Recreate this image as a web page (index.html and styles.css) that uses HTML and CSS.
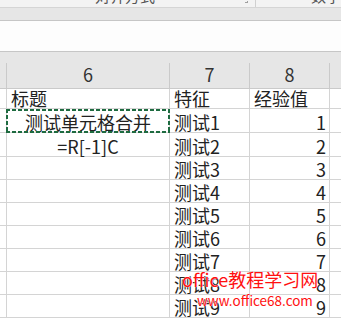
FILE: index.html
```html
<!DOCTYPE html>
<html lang="zh-CN">
<head>
    <meta charset="UTF-8">
    <meta name="viewport" content="width=device-width, initial-scale=1.0">
    <title>合并单元格</title>
    <link rel="stylesheet" href="styles.css">
</head>
<body>

    <div class="ribbon">
        <div class="group">
            <span class="group-label">对齐方式</span>
            <span class="launcher"></span>
        </div>
        <span class="group-label next">数字</span>
    </div>
    <div class="name-bar"></div>
    <div class="formula-bar"></div>

    <div class="sheet">
        <div class="grid">
            <div class="hd"></div><div class="hd">6</div><div class="hd">7</div><div class="hd">8</div><div class="hd tail"></div>

            <div class="c"></div><div class="c">标题</div><div class="c">特征</div><div class="c">经验值</div><div class="c tail"></div>
            <div class="c"></div><div class="c center copied">测试单元格合并</div><div class="c">测试1</div><div class="c num">1</div><div class="c tail"></div>
            <div class="c"></div><div class="c center">=R[-1]C</div><div class="c">测试2</div><div class="c num">2</div><div class="c tail"></div>
            <div class="c"></div><div class="c"></div><div class="c">测试3</div><div class="c num">3</div><div class="c tail"></div>
            <div class="c"></div><div class="c"></div><div class="c">测试4</div><div class="c num">4</div><div class="c tail"></div>
            <div class="c"></div><div class="c"></div><div class="c">测试5</div><div class="c num">5</div><div class="c tail"></div>
            <div class="c"></div><div class="c"></div><div class="c">测试6</div><div class="c num">6</div><div class="c tail"></div>
            <div class="c"></div><div class="c"></div><div class="c">测试7</div><div class="c num">7</div><div class="c tail"></div>
            <div class="c"></div><div class="c"></div><div class="c">测试8</div><div class="c num">8</div><div class="c tail"></div>
            <div class="c"></div><div class="c"></div><div class="c">测试9</div><div class="c num">9</div><div class="c tail"></div>
        </div>

        <div class="watermark">
            <div class="wm-title">office教程学习网</div>
            <div class="wm-url">www.office68.com</div>
        </div>
    </div>

</body>
</html>
```

FILE: styles.css
```css
body {
    margin: 0;
    font-family: "Noto Sans CJK SC", "Noto Sans", sans-serif;
    background: #ffffff;
    color: #222;
    height: 318px;
    overflow: hidden;
}
.ribbon {
    display: flex;
    height: 7px;
    background: #f3f3f3;
    border-bottom: 1px solid #d5d5d5;
    overflow: hidden;
}
.group {
    display: flex;
    width: 276px;
    border-right: 1px solid #d0d0d0;
    box-sizing: border-box;
}
.group-label {
    font-size: 15px;
    line-height: 15px;
    margin-top: -12px;
    margin-left: 95px;
    color: #555;
    white-space: nowrap;
}
.group-label.next {
    margin-left: 55px;
}
.launcher {
    width: 2px;
    height: 1px;
    margin-left: auto;
    margin-right: 7px;
    margin-top: 1px;
    border-right: 1px solid #a0a0a0;
    border-bottom: 1px solid #a0a0a0;
}
.name-bar {
    height: 12px;
    background: #e6e6e6;
    border-bottom: 1px solid #c6c6c6;
}
.formula-bar {
    height: 30px;
    background: #fdfdfd;
    border-bottom: 1px solid #c6c6c6;
}
.sheet {
    position: relative;
    height: 266px;
    overflow: hidden;
    background: #e6e6e6;
    padding-top: 11px;
    box-sizing: border-box;
}
.grid {
    display: grid;
    grid-template-columns: 7px 163px 80px 80px 1fr;
    grid-template-rows: 26px 20px 24px 24px repeat(8, 23px);
}
.hd, .c {
    box-sizing: border-box;
    border-right: 1px solid #d4d4d4;
    border-bottom: 1px solid #d4d4d4;
    font-size: 18px;
    line-height: 20px;
    display: flex;
    align-items: flex-end;
    white-space: nowrap;
}
.hd {
    background: #e6e6e6;
    border-color: #cacaca;
    justify-content: center;
    padding-bottom: 4px;
    color: #333;
}
.c {
    background: #ffffff;
    padding-left: 4px;
}
.tail {
    border-right: none;
}
.center {
    justify-content: center;
    padding-left: 0;
}
.num {
    justify-content: flex-end;
    padding-right: 3px;
}

/* marching ants round the copied cell */
.copied {
    position: relative;
}
.copied::after {
    content: "";
    position: absolute;
    left: -1px;
    right: -1px;
    top: 0;
    bottom: -1px;
    background:
        repeating-linear-gradient(90deg, #1e6b40 0 4px, transparent 4px 6px) top / 100% 2px no-repeat,
        repeating-linear-gradient(90deg, #1e6b40 0 4px, transparent 4px 6px) bottom / 100% 2px no-repeat,
        repeating-linear-gradient(180deg, #1e6b40 0 4px, transparent 4px 6px) left / 2px 100% no-repeat,
        repeating-linear-gradient(180deg, #1e6b40 0 4px, transparent 4px 6px) right / 2px 100% no-repeat;
}

.watermark {
    position: absolute;
    left: 182px;
    top: 218px;
    color: #ff1010;
    text-shadow: 0 0 1px #fff, 0 0 1px #fff;
}
.wm-title {
    font-size: 18px;
    line-height: 18px;
}
.wm-url {
    font-size: 13.5px;
    line-height: 13px;
    margin-top: 6px;
    margin-left: 15px;
}
```
